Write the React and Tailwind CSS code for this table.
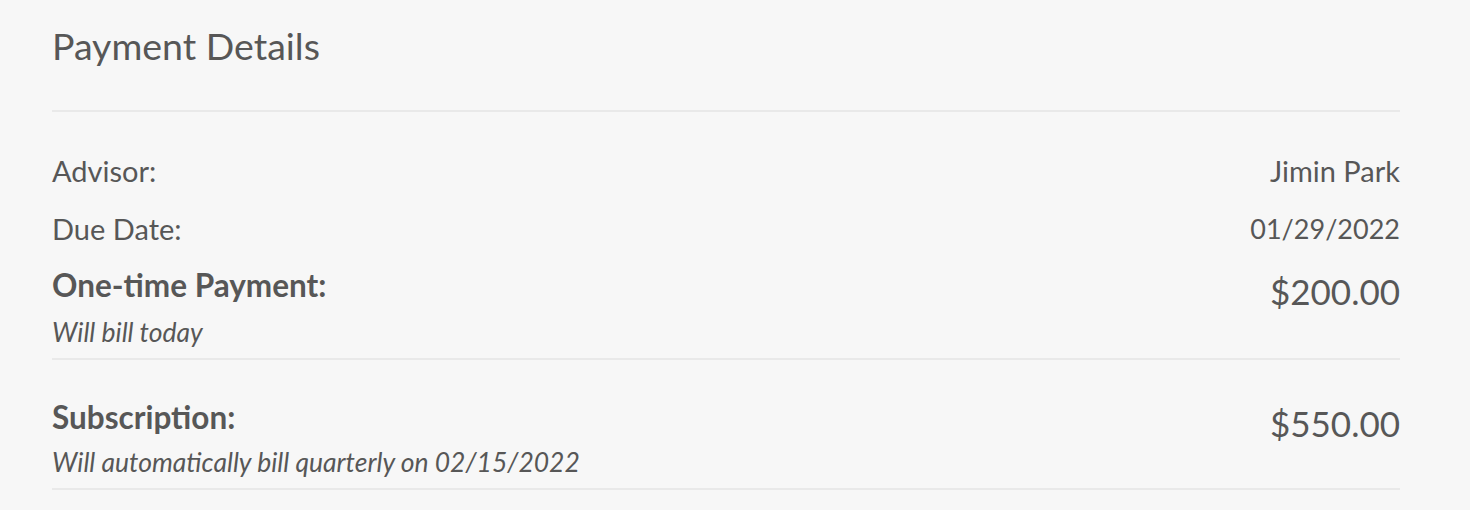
export default function App() {
  const font = { fontFamily: "Lato, 'Noto Sans', sans-serif" };
  return (
    <div className="w-[1470px] h-[510px] bg-[#f7f7f7] text-[#575757] overflow-hidden" style={font}>
      <div className="pl-[52px] pr-[70px] pt-[24px]">
        <h1 className="text-[37.5px] leading-[44px] font-normal">Payment Details</h1>
        <div className="mt-[42px] h-[2px] bg-[#e9e9e9]" />
        <div className="mt-[41px] flex justify-between text-[29px] leading-[36px]">
          <span>Advisor:</span>
          <span>Jimin Park</span>
        </div>
        <div className="mt-[22px] flex justify-between text-[29px] leading-[36px]">
          <span>Due Date:</span>
          <span className="text-[27px]">01/29/2022</span>
        </div>
        <div className="mt-[20px] flex justify-between items-start pb-[10px] border-b-2 border-[#e9e9e9]">
          <div>
            <div className="text-[31.5px] leading-[36px] font-bold">One-time Payment:</div>
            <div className="mt-[13px] text-[26.5px] leading-[32px] italic">Will bill today</div>
          </div>
          <div className="mt-[4px] text-[35px] leading-[40px]">$200.00</div>
        </div>
        <div className="mt-[39px] flex justify-between items-start pb-[10px] border-b-2 border-[#e9e9e9]">
          <div>
            <div className="text-[31.5px] leading-[36px] font-bold">Subscription:</div>
            <div className="mt-[11px] text-[26.5px] leading-[32px] italic">Will automatically bill quarterly on 02/15/2022</div>
          </div>
          <div className="mt-[4px] text-[35px] leading-[40px]">$550.00</div>
        </div>
      </div>
    </div>
  );
}
